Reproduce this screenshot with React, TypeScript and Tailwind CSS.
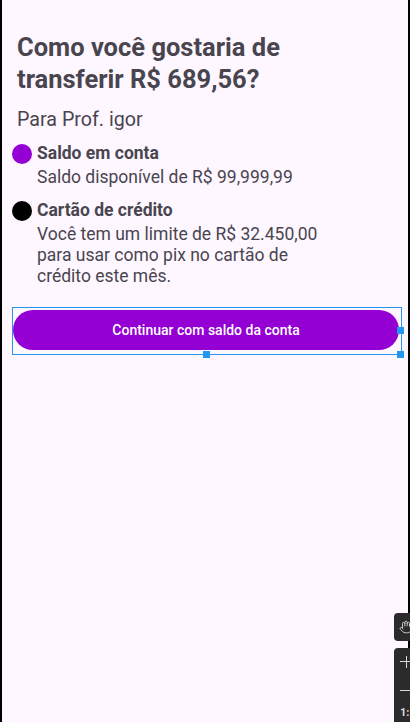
import React from 'react';
import { Hand } from 'lucide-react';

export default function App() {
  return (
    <div className="relative w-[410px] h-[722px] overflow-hidden font-['Roboto',sans-serif]">
      <div className="h-full border-x-2 border-black bg-[#fef7ff] text-[#49454f]">
        <div className="pl-[10px] pt-[31px]">
          <h1 className="pl-[5px] text-[25.5px] leading-[32px] font-bold">
            Como você gostaria de
            <br />
            transferir R$ 689,56?
          </h1>

          <p className="mt-[13px] pl-[5px] text-[19.7px] leading-[24px]">Para Prof. igor</p>

          {/* Saldo em conta */}
          <div className="mt-[9px]">
            <div className="flex items-start gap-[5px]">
              <span className="mt-[3px] w-[20px] h-[20px] rounded-full bg-[#9400d3]" />
              <span className="text-[17.5px] leading-[24px] font-bold">Saldo em conta</span>
            </div>
            <p className="mt-[2px] pl-[25px] text-[17.5px] leading-[21px]">
              Saldo disponível de R$ 99,999,99
            </p>
          </div>

          {/* Cartão de crédito */}
          <div className="mt-[10px]">
            <div className="flex items-start gap-[5px]">
              <span className="mt-[3px] w-[20px] h-[20px] rounded-full bg-black" />
              <span className="text-[17.5px] leading-[24px] font-bold">Cartão de crédito</span>
            </div>
            <p className="mt-[2px] pl-[25px] w-[325px] text-[17.5px] leading-[21px]">
              Você tem um limite de R$ 32.450,00 para usar como pix no cartão de crédito este mês.
            </p>
          </div>

          {/* selected button */}
          <div className="relative mt-[20px] w-[390px] h-[48px] border border-[#2196f3]">
            <button className="mt-[2px] w-[386px] h-[40px] rounded-full bg-[#9400d3] text-white text-[14px] font-medium">
              Continuar com saldo da conta
            </button>
            <span className="absolute left-[384px] top-[19px] w-[7px] h-[7px] bg-[#2196f3]" />
            <span className="absolute left-[190px] top-[43px] w-[7px] h-[7px] bg-[#2196f3]" />
            <span className="absolute left-[384px] top-[43px] w-[7px] h-[7px] bg-[#2196f3]" />
          </div>
        </div>
      </div>

      {/* editor toolbar */}
      <div className="absolute left-[394px] top-[613px] w-[24px] h-[28px] rounded-[4px] bg-[#2b2b2e] flex items-center pl-[5px]">
        <Hand className="w-[14px] h-[14px] text-[#d8d8d8]" strokeWidth={1.5} />
      </div>
      <div className="absolute left-[394px] top-[648px] w-[24px] h-[80px] rounded-[4px] bg-[#2b2b2e] text-[#d8d8d8]">
        <div className="absolute left-[6px] top-[13px] w-[12px] h-px bg-[#d8d8d8]" />
        <div className="absolute left-[11.5px] top-[8px] w-px h-[12px] bg-[#d8d8d8]" />
        <div className="absolute left-[6px] top-[42px] w-[12px] h-px bg-[#d8d8d8]" />
        <span className="absolute left-[6px] top-[58px] text-[11px] leading-[14px] font-bold">1:</span>
      </div>
    </div>
  );
}
